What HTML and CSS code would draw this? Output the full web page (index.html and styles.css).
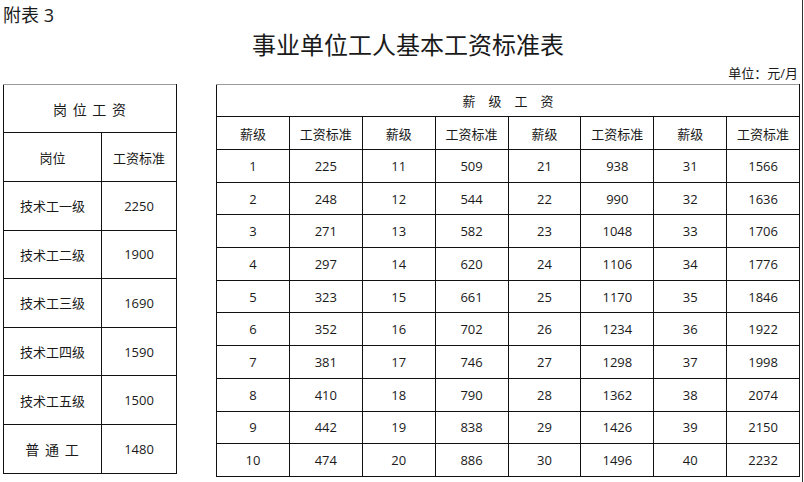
FILE: index.html
```html
<!DOCTYPE html>
<html lang="zh-CN">
<head>
<meta charset="utf-8">
<title>事业单位工人基本工资标准表</title>
<link rel="stylesheet" href="styles.css">
</head>
<body>
<div class="page">
  <div class="label">附表 3</div>
  <h1 class="title">事业单位工人基本工资标准表</h1>
  <div class="unit">单位：元/月</div>
  <div class="tables">
    <table class="post">
      <colgroup><col class="c1"><col class="c2"></colgroup>
      <tr class="h1"><th colspan="2" class="spaced">岗 位 工 资</th></tr>
      <tr class="h2"><th>岗位</th><th>工资标准</th></tr>
      <tr><td>技术工一级</td><td>2250</td></tr>
      <tr><td>技术工二级</td><td>1900</td></tr>
      <tr><td>技术工三级</td><td>1690</td></tr>
      <tr><td>技术工四级</td><td>1590</td></tr>
      <tr><td>技术工五级</td><td>1500</td></tr>
      <tr><td class="spaced2">普 通 工</td><td>1480</td></tr>
    </table>
    <table class="grade">
      <tr class="g1"><th colspan="8" class="wide">薪级工资</th></tr>
      <tr class="g2"><th>薪级</th><th>工资标准</th><th>薪级</th><th>工资标准</th><th>薪级</th><th>工资标准</th><th>薪级</th><th>工资标准</th></tr>
      <tr><td>1</td><td>225</td><td>11</td><td>509</td><td>21</td><td>938</td><td>31</td><td>1566</td></tr>
      <tr><td>2</td><td>248</td><td>12</td><td>544</td><td>22</td><td>990</td><td>32</td><td>1636</td></tr>
      <tr><td>3</td><td>271</td><td>13</td><td>582</td><td>23</td><td>1048</td><td>33</td><td>1706</td></tr>
      <tr><td>4</td><td>297</td><td>14</td><td>620</td><td>24</td><td>1106</td><td>34</td><td>1776</td></tr>
      <tr><td>5</td><td>323</td><td>15</td><td>661</td><td>25</td><td>1170</td><td>35</td><td>1846</td></tr>
      <tr><td>6</td><td>352</td><td>16</td><td>702</td><td>26</td><td>1234</td><td>36</td><td>1922</td></tr>
      <tr><td>7</td><td>381</td><td>17</td><td>746</td><td>27</td><td>1298</td><td>37</td><td>1998</td></tr>
      <tr><td>8</td><td>410</td><td>18</td><td>790</td><td>28</td><td>1362</td><td>38</td><td>2074</td></tr>
      <tr><td>9</td><td>442</td><td>19</td><td>838</td><td>29</td><td>1426</td><td>39</td><td>2150</td></tr>
      <tr><td>10</td><td>474</td><td>20</td><td>886</td><td>30</td><td>1496</td><td>40</td><td>2232</td></tr>
    </table>
  </div>
</div>
</body>
</html>
```
FILE: styles.css
```css
html, body {
  margin: 0;
  padding: 0;
  background: #fff;
}
body {
  width: 804px;
  height: 482px;
  overflow: hidden;
  font-family: "Open Sans", "Noto Sans CJK SC", sans-serif;
  color: #1a1a1a;
}
.page {
  width: 802px;
  height: 482px;
  border-right: 1px solid #333;
  box-sizing: content-box;
}
.label {
  height: 30px;
  line-height: 30px;
  font-size: 18px;
  padding-left: 3px;
}
.title {
  margin: 0;
  height: 30px;
  line-height: 30px;
  font-size: 24px;
  font-weight: normal;
  text-align: center;
  padding-left: 14px;
}
.unit {
  margin-top: 4px;
  height: 18px;
  line-height: 18px;
  font-size: 13px;
  text-align: right;
  padding-right: 4px;
}
.tables {
  margin-top: 2px;
  display: flex;
  align-items: flex-start;
  padding-left: 3px;
  gap: 39px;
}
table {
  border-collapse: collapse;
  table-layout: fixed;
}
th, td {
  border: 1px solid #111;
  padding: 0;
  text-align: center;
  vertical-align: middle;
  font-weight: normal;
  font-size: 13px;
  color: #1a1a1a;
}
tr:first-child th {
  border-top-color: #999;
}
.post {
  width: 173px;
}
.post .c1 { width: 98px; }
.post .c2 { width: 75px; }
.post tr { height: 48.6px; }
.post .h1 { height: 48px; }
.post .h2 { height: 49px; }
.post .spaced {
  font-size: 14px;
  letter-spacing: 1px;
}
.post .spaced2 {
  font-size: 14px;
  letter-spacing: 1px;
}
.grade {
  width: 584px;
}
.grade tr { height: 32.7px; }
.grade .g1 { height: 32px; }
.grade .g2 { height: 33px; }
.grade .wide {
  letter-spacing: 13px;
  text-indent: 13px;
}
```
